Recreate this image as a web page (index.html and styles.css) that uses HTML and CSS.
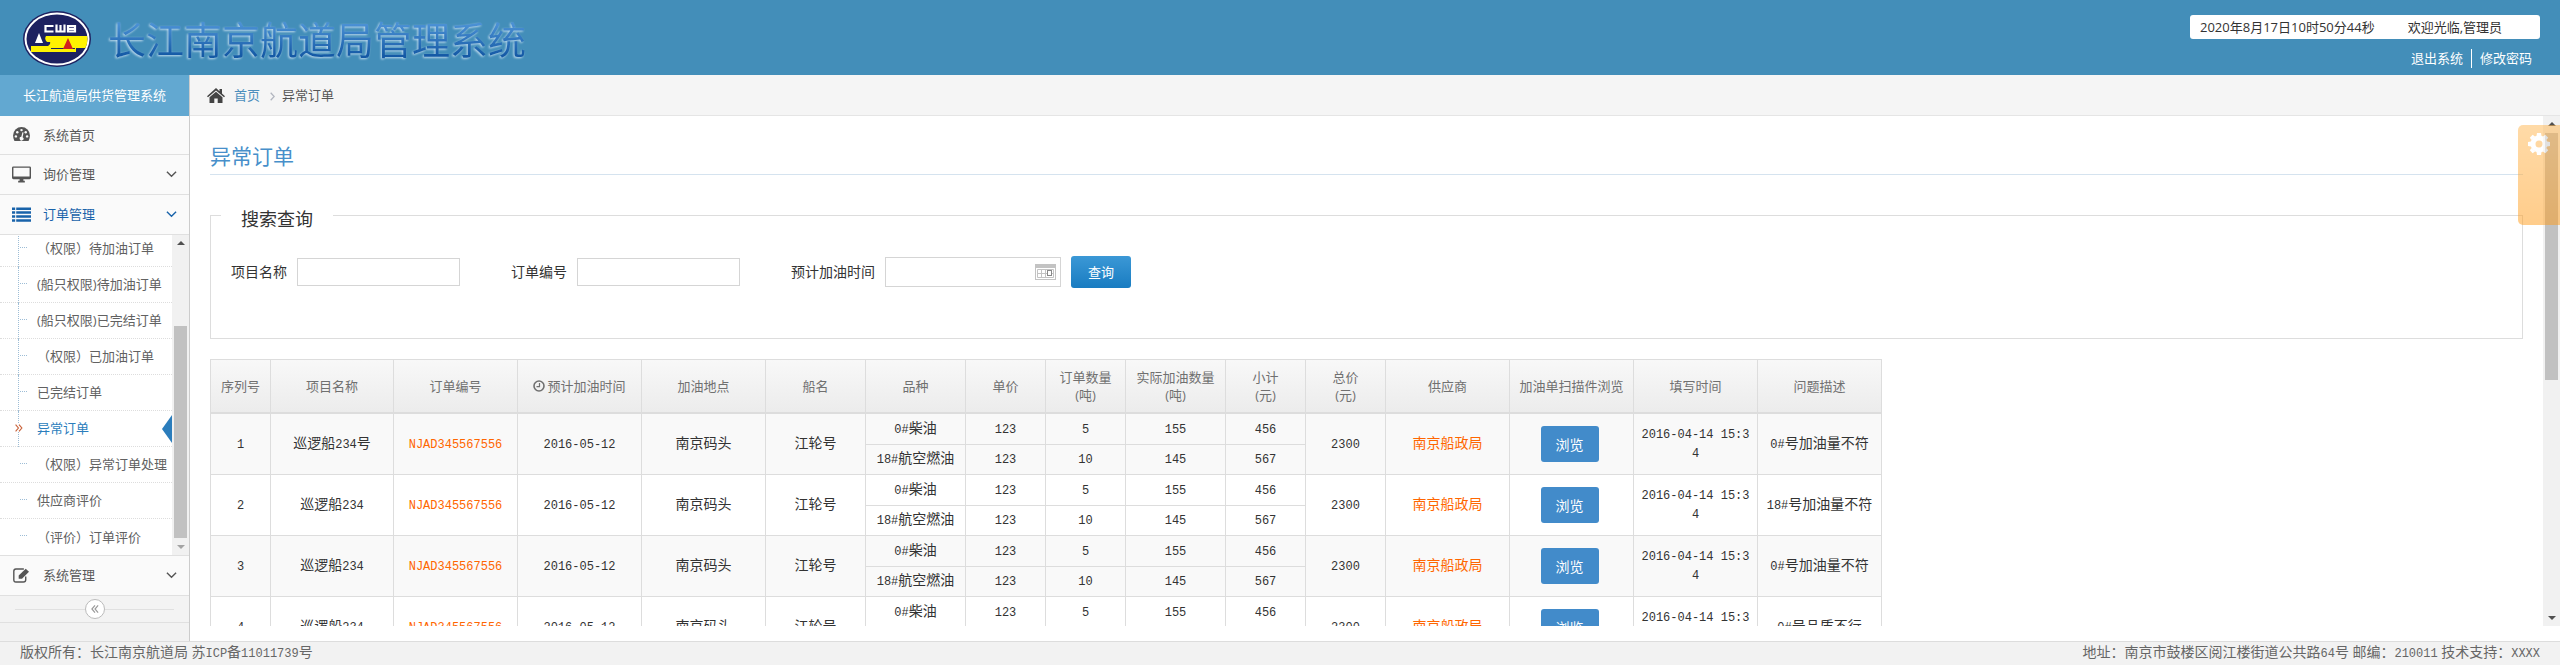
FILE: index.html
```html
<!DOCTYPE html>
<html lang="zh-CN">
<head>
<meta charset="utf-8">
<title>长江南京航道局管理系统</title>
<link rel="stylesheet" href="styles.css">
</head>
<body>
<header class="topbar">
  <div class="brand">
    <svg class="logo" viewBox="0 0 68 56" aria-hidden="true">
      <defs><clipPath id="disc"><ellipse cx="34" cy="28" rx="30.5" ry="24.5"/></clipPath></defs>
      <ellipse cx="34" cy="28" rx="34" ry="28" fill="#1d2160"/>
      <ellipse cx="34" cy="28" rx="32.5" ry="26.5" fill="#fff"/>
      <ellipse cx="34" cy="28" rx="30.5" ry="24.5" fill="#1d2160"/>
      <g clip-path="url(#disc)">
        <path d="M23 25H66V37H53V41H8V35H25Q28 33 27 31H24Q21 28 23 25Z" fill="#fff200"/>
      </g>
      <path d="M28 37.500H52" stroke="#1d2160" stroke-width="1"/>
      <path d="M16 22L20 32H12Z" fill="#fff"/>
      <path d="M45 27L50 38H40Z" fill="#d2201f"/>
      <path d="M30.500 15H22.500V20.500H30.500M33.500 13.500V20.500H41.500V13.500M37.500 14V20.500M45 15H52V20.500H45ZM45 17.800H52" fill="none" stroke="#fff" stroke-width="2.200"/>
    </svg>
    <h1 class="brand-name">长江南京航道局管理系统</h1>
  </div>
  <div class="user">
    <div class="user-box"><span>2020年8月17日10时50分44秒</span><span>欢迎光临,管理员</span></div>
    <nav class="user-links"><a href="#">退出系统</a><a href="#">修改密码</a></nav>
  </div>
</header>
<div class="body">
  <aside class="sidebar">
    <div class="side-title">长江航道局供货管理系统</div>
    <a class="nav first" href="#">
      <svg class="ico" viewBox="0 0 18 16"><path d="M0 9a9 9 0 0 1 18 0c0 2-.5 4-1.500 6H1.500C.5 13 0 11 0 9Z" fill="#555"/><g fill="#fafafa"><circle cx="3" cy="10" r="1.300"/><circle cx="4.500" cy="5.500" r="1.300"/><circle cx="9" cy="3.300" r="1.300"/><circle cx="13.500" cy="5.500" r="1.300"/><circle cx="15" cy="10" r="1.300"/><path d="M10 5.500l1.200.3-1 5a2 2 0 1 1-1.400-.3Z"/></g></svg>
      <span>系统首页</span></a>
    <a class="nav" href="#">
      <svg class="ico wide" viewBox="0 0 20 17"><path d="M1.500 0H18.500Q20 0 20 1.500V12Q20 13.500 18.500 13.500H12V15.200H13.500V17H6.500V15.200H8V13.500H1.500Q0 13.500 0 12V1.500Q0 0 1.500 0ZM1.500 1.500V10.500H18.500V1.500Z" fill="#555" fill-rule="evenodd"/></svg>
      <span>询价管理</span>
      <svg class="chev" viewBox="0 0 12 8"><path d="M1 1.500L6 6.500L11 1.500" /></svg></a>
    <a class="nav open" href="#">
      <svg class="ico" viewBox="0 0 18 14"><path d="M0 1.500H3M4 1.500H18M0 5.200H3M4 5.200H18M0 8.900H3M4 8.900H18M0 12.600H3M4 12.600H18" stroke="#1963aa" stroke-width="2.400"/></svg>
      <span>订单管理</span>
      <svg class="chev" viewBox="0 0 12 8"><path d="M1 1.500L6 6.500L11 1.500"/></svg></a>
    <div class="sub">
      <ul class="sub-list">
        <li><a href="#">（权限）待加油订单</a></li>
        <li><a href="#">(船只权限)待加油订单</a></li>
        <li><a href="#">(船只权限)已完结订单</a></li>
        <li><a href="#">（权限）已加油订单</a></li>
        <li><a href="#">已完结订单</a></li>
        <li class="active"><a href="#">异常订单</a>
          <svg class="mark" viewBox="0 0 7 7"><path d="M.5.5L3 3.500L.5 6.500M3.500.5L6 3.500L3.500 6.500" fill="none" stroke="#c86139"/></svg></li>
        <li class="tail"><a href="#">（权限）异常订单处理</a></li>
        <li class="tail"><a href="#">供应商评价</a></li>
        <li class="tail"><a href="#">（评价）订单评价</a></li>
      </ul>
      <div class="bar"><i class="up"></i><i class="thumb thumb-side"></i><i class="down dim"></i></div>
    </div>
    <a class="nav" href="#">
      <svg class="ico" viewBox="0 0 18 16"><path d="M13.500 9V12.500Q13.500 15 11 15H3Q.8 15 .8 12.500V3.500Q.8 1 3 1H11.500" fill="none" stroke="#555" stroke-width="1.500"/><path d="M6 8L13.500 .8L17 4L9.500 11.500H6Z" fill="#555"/></svg>
      <span>系统管理</span>
      <svg class="chev" viewBox="0 0 12 8"><path d="M1 1.500L6 6.500L11 1.500"/></svg></a>
    <div class="collapse"><button class="collapse-btn" aria-label="收起菜单"><svg viewBox="0 0 9 9"><path d="M4.500.5L1 4.500L4.500 8.500M8 .5L4.500 4.500L8 8.500" fill="none" stroke="#999" stroke-width="1.300"/></svg></button></div>
  </aside>
  <main class="main">
    <nav class="crumbs">
      <svg class="home" viewBox="0 0 18 15"><path d="M9 0L12.500 3.200V1H15V5.500L18 8.200L17 9.300L9 2.400L1 9.300L0 8.200ZM9 3.800L15.500 9.300V15H10.700V10.500H7.300V15H2.500V9.300Z" fill="#444"/></svg>
      <a href="#">首页</a>
      <svg class="sep" viewBox="0 0 5 9"><path d="M.7.7L4.200 4.500L.7 8.300" fill="none" stroke="#b2b6bf" stroke-width="1.300"/></svg>
      <span>异常订单</span>
    </nav>
    <div class="viewport">
      <div class="content">
        <h2 class="page-title">异常订单</h2>
        <section class="search">
          <h3 class="legend">搜索查询</h3>
          <form class="fields">
            <div class="field"><label for="pname">项目名称</label><input id="pname" type="text"></div>
            <div class="field"><label for="ono">订单编号</label><input id="ono" type="text"></div>
            <div class="field last"><label for="date">预计加油时间</label>
              <span class="date"><input id="date" type="text"><svg viewBox="0 0 21 16"><path d="M0 0H21V16H0ZM1 4V15H20V4Z" fill="#c3c3c3" fill-rule="evenodd"/><path d="M2.500 5.500H18.500V13.500H2.500ZM2.500 9.500H18.500M6.500 5.500V13.500M10.500 5.500V13.500" fill="none" stroke="#c3c3c3"/><rect x="12.500" y="6.500" width="4" height="5" fill="#fff" stroke="#888"/></svg></span>
              <button class="query" type="button">查询</button></div>
          </form>
        </section>
        <table class="orders">
          <colgroup><col class="w61"><col class="w123"><col class="w124"><col class="w124"><col class="w124"><col class="w100"><col class="w100"><col class="w80"><col class="w80"><col class="w100"><col class="w80"><col class="w80"><col class="w124"><col class="w124"><col class="w124"><col class="w124"></colgroup>
          <thead><tr><th>序列号</th><th>项目名称</th><th>订单编号</th><th><svg class="clock" viewBox="0 0 12 12"><circle cx="6" cy="6" r="5" fill="none" stroke="#707070" stroke-width="1.600"/><path d="M6.500 3V6.700H3.500" fill="none" stroke="#707070" stroke-width="1.200"/></svg>预计加油时间</th><th>加油地点</th><th>船名</th><th>品种</th><th>单价</th><th>订单数量<br>(吨)</th><th>实际加油数量<br>(吨)</th><th>小计<br>(元)</th><th>总价<br>(元)</th><th>供应商</th><th>加油单扫描件浏览</th><th>填写时间</th><th>问题描述</th></tr></thead>
          <tbody class="odd">
            <tr><td rowspan="2"><b>1</b></td><td rowspan="2">巡逻船<b>234</b>号</td><td rowspan="2"><a href="#"><b>NJAD345567556</b></a></td><td rowspan="2"><b>2016-05-12</b></td><td rowspan="2">南京码头</td><td rowspan="2">江轮号</td><td><b>0#</b>柴油</td><td><b>123</b></td><td><b>5</b></td><td><b>155</b></td><td><b>456</b></td><td rowspan="2"><b>2300</b></td><td rowspan="2"><a href="#">南京船政局</a></td><td rowspan="2"><button class="view" type="button">浏览</button></td><td rowspan="2"><b>2016-04-14 15:34</b></td><td rowspan="2"><b>0#</b>号加油量不符</td></tr>
            <tr><td><b>18#</b>航空燃油</td><td><b>123</b></td><td><b>10</b></td><td><b>145</b></td><td><b>567</b></td></tr>
          </tbody>
          <tbody>
            <tr><td rowspan="2"><b>2</b></td><td rowspan="2">巡逻船<b>234</b></td><td rowspan="2"><a href="#"><b>NJAD345567556</b></a></td><td rowspan="2"><b>2016-05-12</b></td><td rowspan="2">南京码头</td><td rowspan="2">江轮号</td><td><b>0#</b>柴油</td><td><b>123</b></td><td><b>5</b></td><td><b>155</b></td><td><b>456</b></td><td rowspan="2"><b>2300</b></td><td rowspan="2"><a href="#">南京船政局</a></td><td rowspan="2"><button class="view" type="button">浏览</button></td><td rowspan="2"><b>2016-04-14 15:34</b></td><td rowspan="2"><b>18#</b>号加油量不符</td></tr>
            <tr><td><b>18#</b>航空燃油</td><td><b>123</b></td><td><b>10</b></td><td><b>145</b></td><td><b>567</b></td></tr>
          </tbody>
          <tbody class="odd">
            <tr><td rowspan="2"><b>3</b></td><td rowspan="2">巡逻船<b>234</b></td><td rowspan="2"><a href="#"><b>NJAD345567556</b></a></td><td rowspan="2"><b>2016-05-12</b></td><td rowspan="2">南京码头</td><td rowspan="2">江轮号</td><td><b>0#</b>柴油</td><td><b>123</b></td><td><b>5</b></td><td><b>155</b></td><td><b>456</b></td><td rowspan="2"><b>2300</b></td><td rowspan="2"><a href="#">南京船政局</a></td><td rowspan="2"><button class="view" type="button">浏览</button></td><td rowspan="2"><b>2016-04-14 15:34</b></td><td rowspan="2"><b>0#</b>号加油量不符</td></tr>
            <tr><td><b>18#</b>航空燃油</td><td><b>123</b></td><td><b>10</b></td><td><b>145</b></td><td><b>567</b></td></tr>
          </tbody>
          <tbody>
            <tr><td rowspan="2"><b>4</b></td><td rowspan="2">巡逻船<b>234</b></td><td rowspan="2"><a href="#"><b>NJAD345567556</b></a></td><td rowspan="2"><b>2016-05-12</b></td><td rowspan="2">南京码头</td><td rowspan="2">江轮号</td><td><b>0#</b>柴油</td><td><b>123</b></td><td><b>5</b></td><td><b>155</b></td><td><b>456</b></td><td rowspan="2"><b>2300</b></td><td rowspan="2"><a href="#">南京船政局</a></td><td rowspan="2"><button class="view" type="button">浏览</button></td><td rowspan="2"><b>2016-04-14 15:34</b></td><td rowspan="2"><b>0#</b>号品质不行</td></tr>
            <tr><td><b>18#</b>航空燃油</td><td><b>123</b></td><td><b>10</b></td><td><b>145</b></td><td><b>567</b></td></tr>
          </tbody>
        </table>
      </div>
      <div class="bar"><i class="up"></i><i class="thumb thumb-main"></i><i class="down"></i></div>
      <button class="settings" aria-label="设置"><svg viewBox="-11 -11 22 22"><g fill="#fff"><path d="M0-8.500A8.500 8.500 0 1 0 0 8.500A8.500 8.500 0 1 0 0-8.500ZM0-3.500A3.500 3.500 0 1 1 0 3.500A3.500 3.500 0 1 1 0-3.500Z" fill-rule="evenodd"/><path id="tooth" d="M-2.500-8L-2-11H2L2.500-8Z"/><use href="#tooth" transform="rotate(45)"/><use href="#tooth" transform="rotate(90)"/><use href="#tooth" transform="rotate(135)"/><use href="#tooth" transform="rotate(180)"/><use href="#tooth" transform="rotate(225)"/><use href="#tooth" transform="rotate(270)"/><use href="#tooth" transform="rotate(315)"/></g></svg></button>
    </div>
  </main>
</div>
<footer class="footer"><span>版权所有：长江南京航道局 苏<b>ICP</b>备<b>11011739</b>号</span><span>地址：南京市鼓楼区阅江楼街道公共路<b>64</b>号 邮编：<b>210011</b> 技术支持：<b>XXXX</b></span></footer>
</body>
</html>
```
FILE: styles.css
```css
* { box-sizing: border-box; }
html, body { height: 100%; }
body {
  margin: 0;
  display: flex;
  flex-direction: column;
  overflow: hidden;
  background: #fff;
  color: #333;
  font: 13px/20px "Open Sans", "Noto Sans CJK SC", sans-serif;
}
a { text-decoration: none; color: inherit; }
button { font: inherit; border: 0; padding: 0; }
b { font: 12px/18px "Liberation Mono", monospace; }
svg { display: block; flex: none; }

.topbar {
  flex: none;
  height: 75px;
  display: flex;
  justify-content: space-between;
  background: #438eb9;
}
.brand { display: flex; align-items: center; gap: 17px; padding: 2px 0 0 23px; }
.logo { width: 68px; height: 56px; }
.brand-name {
  margin: 0;
  font-size: 38px;
  line-height: 48px;
  font-weight: 400;
  color: transparent;
  background: linear-gradient(#4a90d4 20%, #1459a5 85%);
  background-clip: text;
  -webkit-background-clip: text;
  filter: drop-shadow(-1px 1px 1px #c4def0);
}
.user { display: flex; flex-direction: column; align-items: flex-end; padding: 15px 20px 0 0; }
.user-box {
  width: 350px;
  height: 24px;
  display: flex;
  gap: 33px;
  padding: 2px 10px;
  background: #fff;
  border-radius: 3px;
}
.user-links { display: flex; margin-top: 10px; padding-right: 8px; color: #fff; line-height: 19px; }
.user-links a + a { margin-left: 8px; padding-left: 8px; border-left: 1px solid #fff; }

.body { flex: 1; min-height: 0; display: flex; }
.sidebar { flex: none; width: 190px; background: #f2f2f2; border-right: 1px solid #ccc; }
.side-title { height: 41px; line-height: 41px; padding-left: 23px; background: #62a8d1; color: #fff; }
.nav {
  height: 40px;
  display: flex;
  align-items: center;
  padding: 0 12px 1px;
  background: #fafafa;
  border-bottom: 1px solid #e0e0e0;
  color: #585858;
}
.first { height: 39px; }
.ico { width: 19px; height: 15px; margin-right: 12px; }
.wide { height: 17px; }
.nav .chev { width: 11px; height: 8px; margin-left: auto; fill: none; stroke: #555; stroke-width: 1.5; }
.nav.open { color: #1963aa; }
.nav.open .chev { stroke: #1963aa; }
.sub { height: 321px; display: flex; background: #fff; border-bottom: 1px solid #e0e0e0; overflow: hidden; }
.sub-list {
  flex: 1;
  list-style: none;
  margin: 0;
  padding: 0;
  display: flex;
  flex-direction: column;
  justify-content: flex-end;
  white-space: nowrap;
}
.sub-list li {
  flex: none;
  height: 36px;
  position: relative;
  display: flex;
  align-items: center;
  padding: 0 0 1px 37px;
  border-bottom: 1px dotted #ddd;
  color: #616161;
}
.sub-list li:last-child { border-bottom: 0; }
.sub-list li::before {
  content: "";
  position: absolute;
  left: 18px;
  top: 0;
  height: 36px;
  border-left: 1px dotted #9dbdd6;
}
.sub-list .tail::before { display: none; }
.sub-list li::after {
  content: "";
  position: absolute;
  left: 20px;
  top: 16px;
  width: 7px;
  border-top: 1px dotted #9dbdd6;
}
.sub-list .active { color: #2b7dbc; }
.sub-list .active::after {
  left: auto;
  right: 0;
  top: 4px;
  width: 0;
  border: 14px solid transparent;
  border-left: 0;
  border-right: 10px solid #2b7dbc;
}
.mark { position: absolute; left: 15px; top: 13px; width: 8px; height: 8px; background: #fff; }

.bar {
  flex: none;
  width: 17px;
  display: flex;
  flex-direction: column;
  align-items: center;
  background: #f1f1f1;
}
.up, .down { border: 4px solid transparent; }
.up { margin: 2px 0 7px; border-bottom-color: #505050; }
.down { margin: 7px 0 2px; border-top-color: #505050; }
.dim { border-top-color: #a3a3a3; }
.thumb { width: 13px; background: #c1c1c1; }
.thumb-side { height: 212px; margin-top: auto; }
.thumb-main { height: 247px; margin-bottom: auto; }

.collapse {
  height: 27px;
  padding: 0 15px;
  display: flex;
  align-items: center;
  background: #f3f3f3;
  border-bottom: 1px solid #e0e0e0;
}
.collapse::before, .collapse::after { content: ""; flex: 1; border-top: 1px solid #e0e0e0; }
.collapse-btn {
  width: 20px;
  height: 20px;
  display: grid;
  place-items: center;
  background: #fff;
  border: 1px solid #bbb;
  border-radius: 50%;
}
.collapse-btn svg { width: 8px; height: 8px; }

.main { flex: 1; min-width: 0; display: flex; flex-direction: column; padding-bottom: 15px; }
.crumbs {
  flex: none;
  height: 41px;
  display: flex;
  align-items: center;
  padding-left: 17px;
  background: #f5f5f5;
  border-bottom: 1px solid #e5e5e5;
  color: #555;
}
.crumbs a { color: #4c8fbd; }
.home { width: 18px; height: 15px; margin-right: 9px; }
.sep { width: 5px; height: 9px; margin: 2px 7px 0 10px; }
.viewport { flex: 1; min-height: 0; display: flex; position: relative; }
.content { flex: 1; min-width: 0; overflow: hidden; padding: 24px 20px 0; }
.page-title {
  margin: 0;
  height: 35px;
  font-size: 21px;
  line-height: 32px;
  font-weight: 400;
  color: #478fca;
  border-bottom: 1px solid #d5e3ef;
}
.search { margin-top: 40px; height: 124px; border: 1px solid #ddd; }
.legend {
  display: inline-block;
  margin: -10px 0 0 10px;
  padding: 0 20px;
  background: #fff;
  font-size: 18px;
  line-height: 26px;
  font-weight: 400;
  vertical-align: top;
}
.fields { display: flex; align-items: center; gap: 51px; padding: 20px 20px 0; font-size: 14px; }
.field { display: flex; align-items: center; gap: 10px; }
input { width: 163px; height: 28px; border: 1px solid #d5d5d5; background: #fff; }
.date { position: relative; display: flex; }
.date input { width: 176px; height: 30px; }
.date svg { position: absolute; right: 5px; top: 7px; width: 21px; height: 16px; }
.query {
  width: 60px;
  height: 32px;
  border-radius: 3px;
  background: linear-gradient(#3b98d6, #197cc1);
  color: #fff;
  font-size: 13px;
}

.orders {
  margin-top: 20px;
  table-layout: fixed;
  width: 1672px;
  border-collapse: separate;
  border-spacing: 0;
  text-align: center;
  font: 14px/18px "Liberation Serif", "Noto Sans CJK SC", serif;
}
.w61 { width: 61px; }
.w80 { width: 80px; }
.w100 { width: 100px; }
.w123 { width: 123px; }
.w124 { width: 124px; }
th, td { border-right: 1px solid #ddd; border-bottom: 1px solid #ddd; padding: 0 7px; word-break: break-all; }
th:first-child, td[rowspan]:first-child { border-left: 1px solid #ddd; }
th {
  height: 55px;
  padding: 0;
  border-top: 1px solid #ddd;
  border-bottom-width: 2px;
  background: linear-gradient(#f8f8f8, #ececec);
  font: 13px/18px "Open Sans", "Noto Sans CJK SC", sans-serif;
  color: #707070;
}
tr:first-child td { height: 31px; }
tr:last-child td { height: 30px; }
.odd { background: #f9f9f9; }
td a { color: #f60; }
.clock { display: inline-block; width: 12px; height: 12px; margin-right: 2px; vertical-align: -1px; }
.view {
  width: 58px;
  height: 36px;
  margin-right: 4px;
  border-radius: 3px;
  background: #428bca;
  color: #fff;
  font: 14px/20px "Noto Sans CJK SC", sans-serif;
}
.settings {
  position: absolute;
  right: 0;
  top: 9px;
  width: 42px;
  height: 100px;
  display: flex;
  align-items: flex-start;
  padding: 8px 10px;
  border-radius: 5px 0 0 5px;
  background: linear-gradient(#ffb752, #ff9c1a);
  opacity: .5;
}
.settings svg { width: 22px; height: 22px; }

.footer {
  flex: none;
  height: 24px;
  display: flex;
  justify-content: space-between;
  padding: 0 20px;
  background: #f2f2f2;
  border-top: 1px solid #ddd;
  color: #666;
  font: 14px/22px "Liberation Serif", "Noto Sans CJK SC", serif;
}
```
